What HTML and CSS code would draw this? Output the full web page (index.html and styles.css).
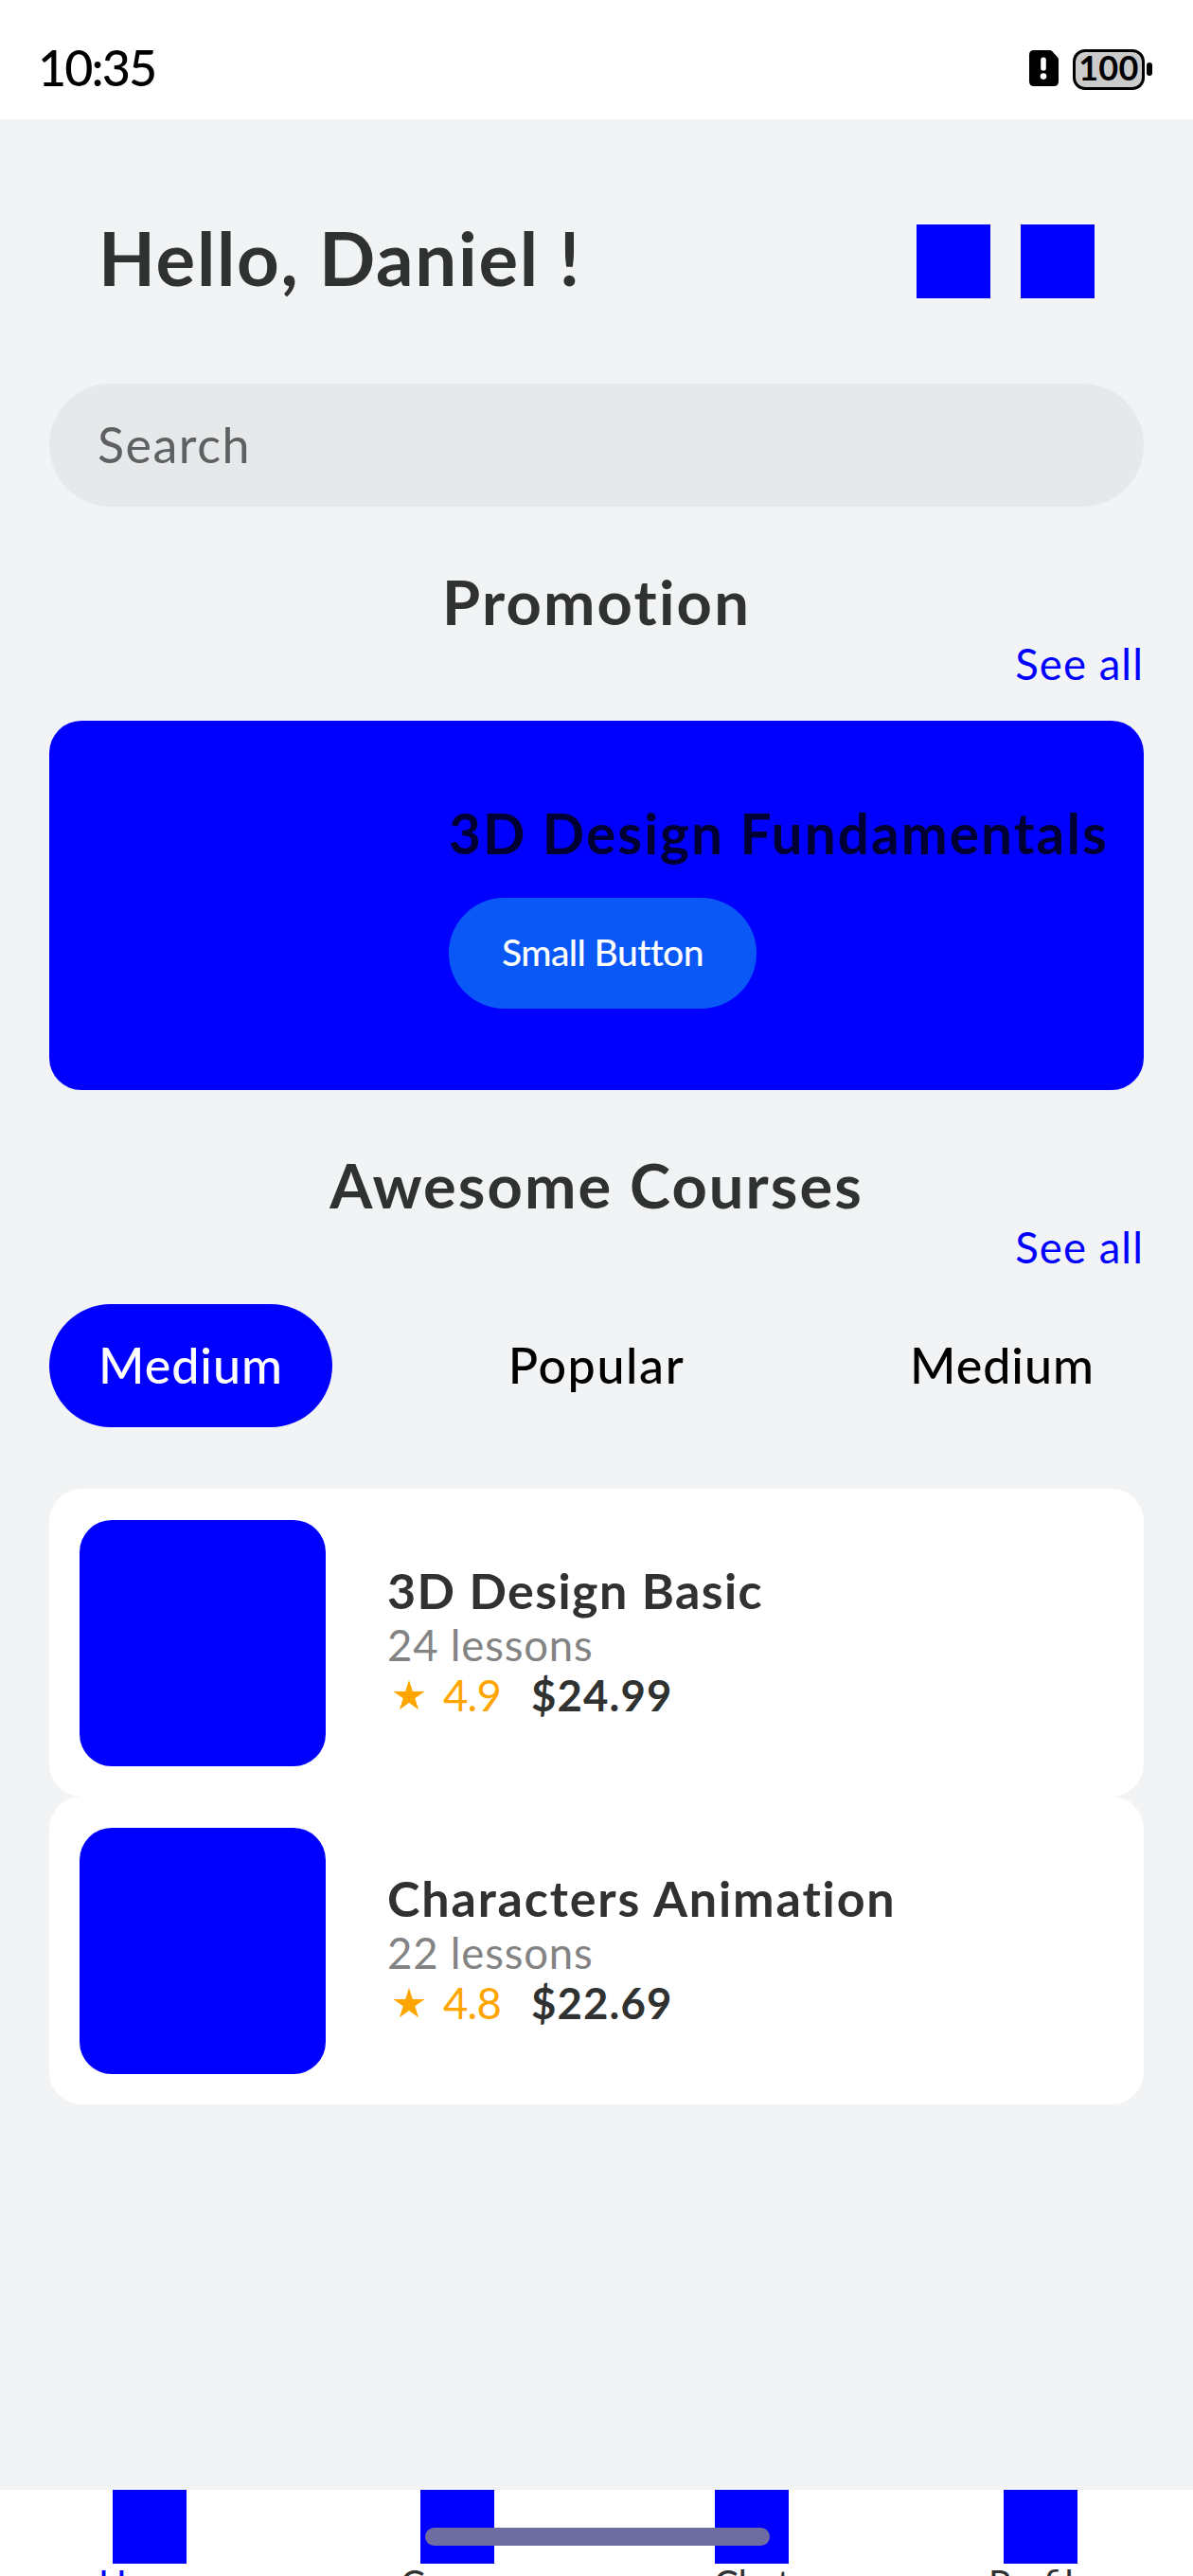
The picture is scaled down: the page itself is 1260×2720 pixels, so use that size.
FILE: index.html
```html
<!DOCTYPE html>
<html lang="en">
<head>
<meta charset="utf-8">
<title>Courses</title>
<link rel="stylesheet" href="styles.css">
</head>
<body>
<div class="screen">
  <div class="status-bar">
    <span class="clock">10:35</span>
    <div class="status-icons">
      <svg class="sim" width="31" height="38" viewBox="0 0 31 38">
        <path d="M5 0H21.5Q23.2 0 24.4 1.2L29.8 7.2Q31 8.4 31 10V33Q31 38 26 38H5Q0 38 0 33V5Q0 0 5 0Z" fill="#000"/>
        <rect x="12.2" y="7.5" width="5.6" height="14" rx="2.6" fill="#fff"/>
        <circle cx="15" cy="27.6" r="3.3" fill="#fff"/>
      </svg>
      <div class="battery"><span>100</span></div>
      <div class="battery-tip"></div>
    </div>
  </div>

  <header class="header">
    <h1 class="greeting">Hello, Daniel !</h1>
    <div class="actions"><div class="square"></div><div class="square"></div></div>
  </header>

  <main class="content">
    <div class="search">Search</div>

    <h2 class="section-title promo-heading">Promotion</h2>
    <a class="see-all">See all</a>
    <section class="banner">
      <h3 class="banner-title">3D Design Fundamentals</h3>
      <button class="small-button">Small Button</button>
    </section>

    <h2 class="section-title courses-heading">Awesome Courses</h2>
    <a class="see-all">See all</a>
    <div class="tabs">
      <div class="tab active">Medium</div>
      <div class="tab popular">Popular</div>
      <div class="tab">Medium</div>
    </div>

    <div class="courses">
      <article class="card">
        <div class="thumb"></div>
        <div class="info">
          <h4 class="course-title">3D Design Basic</h4>
          <p class="lessons">24 lessons</p>
          <div class="meta">
            <svg class="star" width="34" height="32" viewBox="0 0 34 32"><path d="M17 0L20.9 12H33.5L23.3 19.3L27.1 31.2L17 23.9L6.9 31.2L10.7 19.3L.5 12H13.1Z" fill="#ffa500"/></svg>
            <span class="rating">4.9</span>
            <span class="price">$24.99</span>
          </div>
        </div>
      </article>
      <article class="card">
        <div class="thumb"></div>
        <div class="info">
          <h4 class="course-title long">Characters Animation</h4>
          <p class="lessons">22 lessons</p>
          <div class="meta">
            <svg class="star" width="34" height="32" viewBox="0 0 34 32"><path d="M17 0L20.9 12H33.5L23.3 19.3L27.1 31.2L17 23.9L6.9 31.2L10.7 19.3L.5 12H13.1Z" fill="#ffa500"/></svg>
            <span class="rating">4.8</span>
            <span class="price">$22.69</span>
          </div>
        </div>
      </article>
    </div>
  </main>

  <nav class="tab-bar">
    <div class="nav-item home"><div class="square"></div><span>Home</span></div>
    <div class="nav-item course"><div class="square"></div><span>Course</span></div>
    <div class="nav-item chat"><div class="square"></div><span>Chat</span></div>
    <div class="nav-item profile"><div class="square"></div><span>Profile</span></div>
    <div class="home-indicator"></div>
  </nav>
</div>
</body>
</html>
```
FILE: styles.css
```css
* { box-sizing: border-box; margin: 0; padding: 0; }
body { font-family: Lato, "Open Sans", sans-serif; color: #303131; }
.screen {
  width: 1260px; height: 2720px; overflow: hidden;
  display: flex; flex-direction: column; background: #f1f3f5;
}
.square { width: 78px; height: 78px; flex: none; background: #00f; }

/* status bar */
.status-bar {
  height: 126px; padding: 0 43px 0 40px; background: #fff; color: #000;
  display: flex; justify-content: space-between; align-items: center; flex: none;
}
.clock {
  font-size: 52px; line-height: 60px; font-weight: 500;
  letter-spacing: -0.037em; padding-top: 15px;
}
.status-icons { display: flex; align-items: center; padding-top: 20px; }
.sim { margin-bottom: 2px; }
.battery {
  width: 76px; height: 43px; margin-left: 15px; border: 3px solid #000; border-radius: 13px;
  background: #cbcbcb; display: flex; justify-content: center; align-items: center;
}
.battery span { font-size: 36px; line-height: 36px; font-weight: 700; letter-spacing: 0.01em; padding-bottom: 4px; }
.battery-tip { width: 6px; height: 14px; margin-left: 2px; border-radius: 3px; background: #000; }

/* greeting */
.header {
  display: flex; justify-content: space-between; align-items: center;
  padding: 111px 104px 0; flex: none;
}
.greeting { font-size: 78px; line-height: 70px; padding-bottom: 8px; letter-spacing: 0.0215em; }
.actions { display: flex; gap: 32px; }

.content { padding: 90px 52px 0; display: flex; flex-direction: column; }
.search {
  height: 130px; padding: 0 51px 3px; border-radius: 65px; background: #e6e8ea; color: #5f6061;
  display: flex; align-items: center; font-size: 52px; letter-spacing: 0.0287em;
}
.section-title {
  margin-top: 62px; font-size: 65px; line-height: 76px; text-align: center; letter-spacing: 0.034em;
}
.courses-heading { letter-spacing: 0.0318em; }
.see-all {
  margin-top: 1px; align-self: flex-end; color: #00f;
  font-size: 45.5px; line-height: 53px; letter-spacing: 0.0235em;
}

/* promotion banner */
.banner {
  margin-top: 34px; height: 390px; padding: 84px 0 0 422px; border-radius: 34px; background: #00f;
}
.banner-title { font-size: 58.5px; line-height: 68px; color: #000033; letter-spacing: 0.0355em; white-space: nowrap; }
.small-button {
  display: block; width: 325px; height: 117px; margin-top: 35px; padding-bottom: 3px;
  border: 0; border-radius: 59px; background: #0a59f7; color: #fff;
  font: 500 39px/47px Lato, sans-serif; letter-spacing: -0.015em;
}

/* category tabs */
.tabs { display: flex; justify-content: space-between; margin-top: 34px; }
.tab {
  width: 299px; height: 130px; padding-bottom: 3px; border-radius: 65px; color: #000;
  display: flex; align-items: center; justify-content: center;
  font-size: 52px; font-weight: 500; letter-spacing: 0.018em;
}
.tab.active { background: #00f; color: #fff; }
.tab.popular { letter-spacing: 0.0306em; }

/* course cards */
.courses { margin-top: 65px; }
.card {
  height: 325px; padding: 0 32px; border-radius: 34px; background: #fff;
  display: flex; align-items: center; gap: 65px;
}
.thumb { width: 260px; height: 260px; border-radius: 34px; background: #00f; }
.info { padding-bottom: 4px; }
.course-title { font-size: 52px; line-height: 61px; letter-spacing: 0.0267em; }
.course-title.long { letter-spacing: 0.0356em; }
.lessons { font-size: 45.5px; line-height: 53px; color: #838383; letter-spacing: 0.0176em; }
.meta { display: flex; align-items: center; font-size: 45.5px; line-height: 53px; }
.star { margin-left: 6px; margin-right: 19px; }
.rating { color: #ffa500; letter-spacing: -0.0179em; width: 93px; }
.price { font-weight: 700; letter-spacing: 0.0248em; }

/* bottom navigation */
.tab-bar {
  position: relative; margin-top: auto; height: 91px; background: #fff; flex: none;
  display: flex; justify-content: space-around;
}
.nav-item { display: flex; flex-direction: column; align-items: center; font-size: 39px; line-height: 40px; }
.home { width: 107.5px; color: #00f; letter-spacing: 0.03em; }
.course { width: 125px; }
.chat { width: 79px; }
.profile { width: 113px; }
.home-indicator {
  position: absolute; left: 449px; top: 40px; width: 364px; height: 19px;
  border-radius: 10px; background: #6e6ca0;
}
```
